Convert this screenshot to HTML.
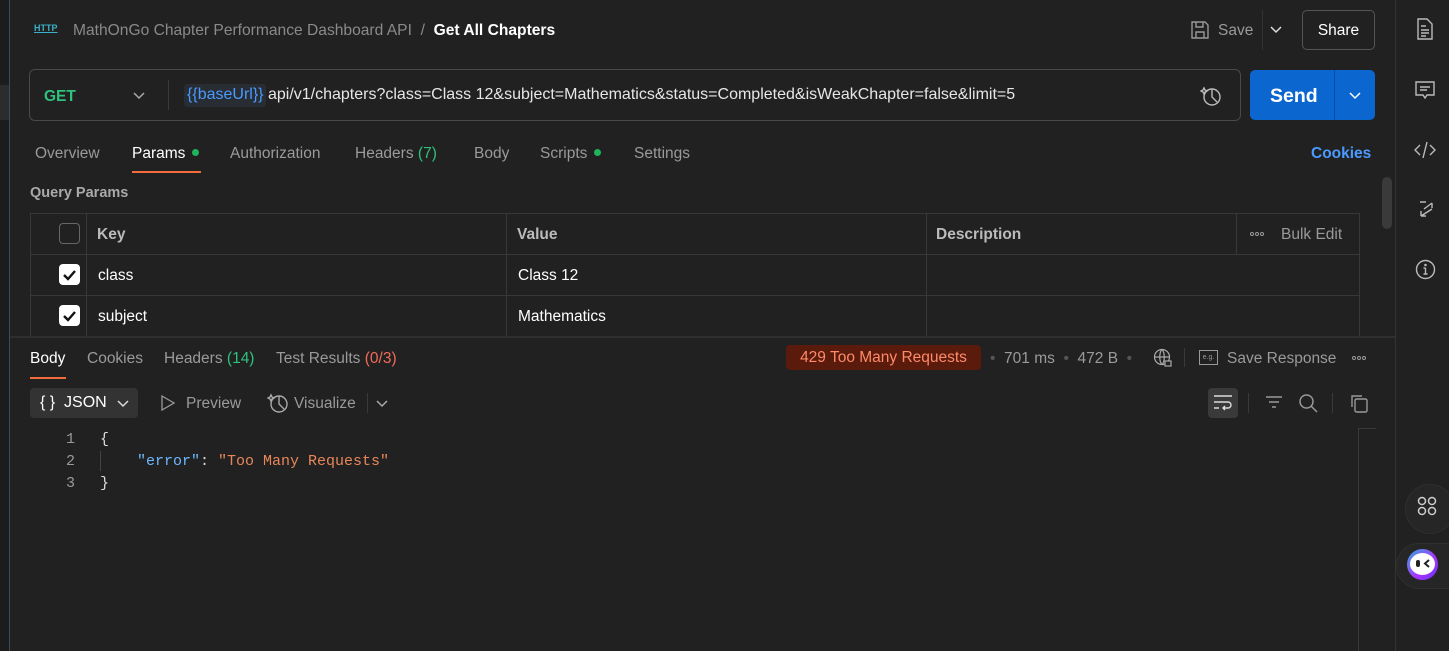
<!DOCTYPE html>
<html><head><meta charset="utf-8"><style>
*{box-sizing:border-box;margin:0;padding:0}
body{width:1449px;height:651px;background:#212121;font-family:"Liberation Sans",sans-serif;color:#c8c8c8;position:relative;overflow:hidden;font-size:15px}
.a{position:absolute;white-space:nowrap}
.g{color:#9a9a9a}
.w{color:#fff}
.dot{display:inline-block;width:7px;height:7px;border-radius:50%;background:#1fb35e;margin-left:7px;vertical-align:2px}
.cb{position:absolute;width:21px;height:21px;border-radius:4px}
.cb.on{background:#fff}
.cb.off{border:1px solid #666}
svg{position:absolute}
.oo{position:absolute;width:4px;height:4px;border:1px solid #999;border-radius:50%}
</style></head><body>
<div class="a" style="left:0;top:0;width:9px;height:651px;background:#1c1c1c"></div>
<div class="a" style="left:0;top:85px;width:9px;height:35px;background:#2c2c2c"></div>
<div class="a" style="left:9px;top:0;width:1px;height:651px;background:#3a4a66"></div>
<div class="a" style="left:1395px;top:0;width:1px;height:651px;background:#333"></div>

<div class="a" style="left:34px;top:23px;font-size:9px;color:#3ab0c8;font-weight:bold;text-decoration:underline">HTTP</div>
<div class="a" style="left:73px;top:22px;font-size:15.6px;color:#8a8a8a">MathOnGo Chapter Performance Dashboard API&nbsp; / &nbsp;<b style="color:#fff">Get All Chapters</b></div>
<svg style="left:1190px;top:20px" width="20" height="20" viewBox="0 0 20 20" fill="none" stroke="#999" stroke-width="1.4"><path d="M2 2h13l3 3v13H2z"/><path d="M6 2v5h7V2M6 18v-6h8v6"/></svg>
<div class="a g" style="left:1218px;top:22px;font-size:15.5px">Save</div>
<div class="a" style="left:1262px;top:10px;width:1px;height:40px;background:#333"></div>
<svg style="left:1270px;top:26px" width="12" height="8" viewBox="0 0 12 8" fill="none" stroke="#ddd" stroke-width="1.5"><path d="M1 1l5 5 5-5"/></svg>
<div class="a" style="left:1302px;top:10px;width:73px;height:40px;border:1px solid #555;border-radius:5px;color:#fff;text-align:center;line-height:39px;font-size:15.5px">Share</div>

<div class="a" style="left:29px;top:69px;width:1212px;height:52px;border:1px solid #4a4a4a;border-radius:6px"></div>
<div class="a" style="left:44px;top:88px;color:#2ec27e;font-weight:bold;font-size:15.5px">GET</div>
<svg style="left:133px;top:92px" width="12" height="8" viewBox="0 0 12 8" fill="none" stroke="#aaa" stroke-width="1.5"><path d="M1 1l5 5 5-5"/></svg>
<div class="a" style="left:168px;top:80px;width:1px;height:30px;background:#3a3a3a"></div>
<div class="a" style="left:184px;top:84px;width:82px;height:23px;background:#282c33;border-radius:3px"></div>
<div class="a" style="left:187px;top:86px;font-size:16px;color:#e6e6e6"><span style="color:#4a9aff">{{baseUrl}}</span> api/v1/chapters?class=Class 12&amp;subject=Mathematics&amp;status=Completed&amp;isWeakChapter=false&amp;limit=5</div>
<svg style="left:1200px;top:85px" width="22" height="22" viewBox="0 0 22 22" fill="none" stroke="#bbb" stroke-width="1.4"><circle cx="12" cy="12" r="8"/><path d="M12 4v8l5 5M4 3l1 2 2 1-2 1-1 2-1-2-2-1 2-1z"/></svg>
<div class="a" style="left:1250px;top:70px;width:125px;height:50px;background:#0b66d0;border-radius:5px"></div>
<div class="a" style="left:1334px;top:70px;width:1px;height:50px;background:#0a4f9f"></div>
<div class="a" style="left:1270px;top:85px;color:#fff;font-weight:bold;font-size:19.5px">Send</div>
<svg style="left:1349px;top:92px" width="12" height="8" viewBox="0 0 12 8" fill="none" stroke="#fff" stroke-width="1.5"><path d="M1 1l5 5 5-5"/></svg>

<div style="position:absolute;left:0;top:145px;width:1449px;font-size:15.5px">
<div class="a g" style="left:35px;top:0">Overview</div>
<div class="a w" style="left:132px;top:0">Params<span class="dot"></span></div>
<div class="a g" style="left:230px;top:0">Authorization</div>
<div class="a g" style="left:355px;top:0">Headers <span style="color:#2ec27e">(7)</span></div>
<div class="a g" style="left:474px;top:0">Body</div>
<div class="a g" style="left:540px;top:0">Scripts<span class="dot"></span></div>
<div class="a g" style="left:634px;top:0">Settings</div>
<div class="a" style="left:1311px;top:0;color:#4a9aff;font-weight:bold">Cookies</div>
</div>
<div class="a" style="left:132px;top:171px;width:69px;height:2px;background:#f26b3a"></div>

<div class="a" style="left:30px;top:185px;color:#aaa;font-weight:bold;font-size:14.5px">Query Params</div>
<div class="a" style="left:1382px;top:177px;width:10px;height:52px;background:#3a3a3a;border-radius:5px"></div>

<div class="a" style="left:30px;top:213px;width:1330px;height:124px;border:1px solid #383838;border-bottom:none"></div>
<div class="a" style="left:30px;top:254px;width:1330px;height:1px;background:#383838"></div>
<div class="a" style="left:30px;top:295px;width:1330px;height:1px;background:#383838"></div>
<div class="a" style="left:86px;top:213px;width:1px;height:124px;background:#383838"></div>
<div class="a" style="left:506px;top:213px;width:1px;height:124px;background:#383838"></div>
<div class="a" style="left:926px;top:213px;width:1px;height:124px;background:#383838"></div>
<div class="a" style="left:1236px;top:213px;width:1px;height:41px;background:#383838"></div>
<div class="cb off" style="left:59px;top:223px"></div>
<div class="cb on" style="left:59px;top:264px"></div>
<div class="cb on" style="left:59px;top:305px"></div>
<svg style="left:59px;top:264px" width="21" height="21" viewBox="0 0 21 21" fill="none" stroke="#111" stroke-width="2.4"><path d="M5 11l4 4 7-8"/></svg>
<svg style="left:59px;top:305px" width="21" height="21" viewBox="0 0 21 21" fill="none" stroke="#111" stroke-width="2.4"><path d="M5 11l4 4 7-8"/></svg>
<div style="position:absolute;left:0;top:226px;font-size:15.5px">
<div class="a" style="left:97px;top:0;color:#bbb;font-weight:bold">Key</div>
<div class="a" style="left:517px;top:0;color:#bbb;font-weight:bold">Value</div>
<div class="a" style="left:936px;top:0;color:#bbb;font-weight:bold">Description</div>
<div class="a g" style="left:1281px;top:0">Bulk Edit</div>
<div class="a w" style="left:98px;top:41px">class</div>
<div class="a w" style="left:518px;top:41px">Class 12</div>
<div class="a w" style="left:98px;top:82px">subject</div>
<div class="a w" style="left:518px;top:82px">Mathematics</div>
</div>
<div class="oo" style="left:1250px;top:232px"></div><div class="oo" style="left:1255px;top:232px"></div><div class="oo" style="left:1260px;top:232px"></div>

<div class="a" style="left:10px;top:336px;width:1385px;height:2px;background:#2e2e2e"></div>

<div style="position:absolute;left:0;top:350px;font-size:15.5px">
<div class="a w" style="left:30px;top:0">Body</div>
<div class="a g" style="left:87px;top:0">Cookies</div>
<div class="a g" style="left:164px;top:0">Headers <span style="color:#2ec27e">(14)</span></div>
<div class="a g" style="left:276px;top:0">Test Results <span style="color:#f26b5a">(0/3)</span></div>
<div class="a g" style="left:990px;top:0"><span style="color:#555">•</span>&nbsp; 701 ms &nbsp;<span style="color:#555">•</span>&nbsp; 472 B &nbsp;<span style="color:#555">•</span></div>
<div class="a g" style="left:1227px;top:0">Save Response</div>
</div>
<div class="a" style="left:30px;top:377px;width:36px;height:2px;background:#f26b3a"></div>
<div class="a" style="left:786px;top:345px;width:195px;height:25px;background:#5a1a0c;border-radius:4px;color:#ff8a6a;text-align:center;line-height:26px;font-size:15.5px">429 Too Many Requests</div>
<svg style="left:1153px;top:348px" width="20" height="20" viewBox="0 0 20 20" fill="none" stroke="#aaa" stroke-width="1.2"><circle cx="9" cy="9" r="7.5"/><path d="M1.5 9h15M9 1.5c-3 3-3 12 0 15M9 1.5c3 3 3 12 0 15"/><rect x="12" y="13" width="6" height="5" fill="#212121"/></svg>
<div class="a" style="left:1184px;top:348px;width:1px;height:19px;background:#3a3a3a"></div>
<div class="a" style="left:1199px;top:350px;width:19px;height:15px;border:1px solid #999;font-size:7px;color:#999;text-align:center;line-height:13px">e.g.</div>
<div class="oo" style="left:1352px;top:356px"></div><div class="oo" style="left:1357px;top:356px"></div><div class="oo" style="left:1362px;top:356px"></div>

<div class="a" style="left:30px;top:388px;width:108px;height:30px;background:#333;border-radius:4px"></div>
<div class="a w" style="left:40px;top:394px;font-size:16px">{ }&nbsp; JSON</div>
<svg style="left:117px;top:400px" width="12" height="8" viewBox="0 0 12 8" fill="none" stroke="#ddd" stroke-width="1.5"><path d="M1 1l5 5 5-5"/></svg>
<svg style="left:160px;top:394px" width="16" height="18" viewBox="0 0 16 18" fill="none" stroke="#999" stroke-width="1.3"><path d="M2 2l12 7-12 7z"/></svg>
<div class="a g" style="left:186px;top:395px;font-size:15.5px">Preview</div>
<svg style="left:267px;top:392px" width="22" height="22" viewBox="0 0 22 22" fill="none" stroke="#aaa" stroke-width="1.4"><circle cx="12" cy="12" r="8"/><path d="M12 4v8l5 5M4 3l1 2 2 1-2 1-1 2-1-2-2-1 2-1z"/></svg>
<div class="a g" style="left:294px;top:395px;font-size:15.5px">Visualize</div>
<div class="a" style="left:367px;top:393px;width:1px;height:20px;background:#3a3a3a"></div>
<svg style="left:376px;top:400px" width="12" height="8" viewBox="0 0 12 8" fill="none" stroke="#aaa" stroke-width="1.5"><path d="M1 1l5 5 5-5"/></svg>
<div class="a" style="left:1208px;top:388px;width:30px;height:30px;background:#3a3a3a;border-radius:4px"></div>
<svg style="left:1213px;top:395px" width="20" height="16" viewBox="0 0 20 16" fill="none" stroke="#ddd" stroke-width="1.4"><path d="M1 1h18M1 7h14a3 3 0 010 6H10M1 13h5M12 11l-2 2 2 2"/></svg>
<div class="a" style="left:1248px;top:393px;width:1px;height:20px;background:#3a3a3a"></div>
<svg style="left:1265px;top:395px" width="18" height="16" viewBox="0 0 18 16" fill="none" stroke="#999" stroke-width="1.4"><path d="M1 2h16M4 7h10M7 12h4"/></svg>
<svg style="left:1298px;top:393px" width="20" height="20" viewBox="0 0 20 20" fill="none" stroke="#999" stroke-width="1.5"><circle cx="8.5" cy="8.5" r="6.5"/><path d="M13 13l6 6"/></svg>
<div class="a" style="left:1332px;top:393px;width:1px;height:20px;background:#3a3a3a"></div>
<svg style="left:1350px;top:394px" width="19" height="19" viewBox="0 0 19 19" fill="none" stroke="#999" stroke-width="1.4"><rect x="5" y="5" width="12" height="13" rx="1.5"/><path d="M2 13V2h10"/></svg>

<div class="a" style="left:1358px;top:428px;width:1px;height:223px;background:#3a3a3a"></div>
<div class="a" style="left:1358px;top:428px;width:18px;height:1px;background:#3a3a3a"></div>
<div style="position:absolute;left:0;top:429px;font-family:'Liberation Mono',monospace;font-size:15px;line-height:22.5px">
<div class="a" style="left:66px;top:0;color:#9a9a9a">1</div><div class="a" style="left:100px;top:0;color:#ddd">{</div>
<div class="a" style="left:66px;top:22px;color:#9a9a9a">2</div>
<div class="a" style="left:100px;top:22px;width:1px;height:20px;background:#444"></div>
<div class="a" style="left:137px;top:22px"><span style="color:#6cb8ff">"error"</span><span style="color:#ddd">: </span><span style="color:#e8865a">"Too Many Requests"</span></div>
<div class="a" style="left:66px;top:44px;color:#9a9a9a">3</div><div class="a" style="left:100px;top:44px;color:#ddd">}</div>
</div>

<svg style="left:1416px;top:18px" width="18" height="22" viewBox="0 0 18 22" fill="none" stroke="#bbb" stroke-width="1.4"><path d="M2 1h9l5 5v15H2z"/><path d="M5 8h5M5 12h8M5 15h8M5 18h5"/></svg>
<svg style="left:1415px;top:80px" width="20" height="20" viewBox="0 0 20 20" fill="none" stroke="#bbb" stroke-width="1.4"><path d="M1 2h18v13H12l-2 3-2-3H1z"/><path d="M5 7h10M5 10h7"/></svg>
<svg style="left:1414px;top:141px" width="22" height="18" viewBox="0 0 22 18" fill="none" stroke="#bbb" stroke-width="1.4"><path d="M6 4L1 9l5 5M16 4l5 5-5 5M13 1L9 17"/></svg>
<svg style="left:1418px;top:200px" width="16" height="18" viewBox="0 0 16 18" fill="none" stroke="#bbb" stroke-width="1.4"><path d="M2 2h6M14 3L6 9M14 3v5M14 9L3 16M3 16h5M3 16v-5"/></svg>
<svg style="left:1415px;top:259px" width="21" height="21" viewBox="0 0 21 21" fill="none" stroke="#bbb" stroke-width="1.4"><circle cx="10.5" cy="10.5" r="9"/><path d="M10.5 9v6M8.5 15h4M8.5 9h2"/><circle cx="10.5" cy="6" r=".6" fill="#bbb"/></svg>
<div class="a" style="left:1405px;top:484px;width:50px;height:50px;border-radius:25px;background:#262626;border:1px solid #2f2f2f"></div>
<svg style="left:1417px;top:496px" width="20" height="20" viewBox="0 0 20 20" fill="none" stroke="#ccc" stroke-width="1.5"><circle cx="5" cy="5" r="3.5"/><circle cx="15" cy="5" r="3.5"/><circle cx="5" cy="15" r="3.5"/><circle cx="15" cy="15" r="3.5"/></svg>
<div class="a" style="left:1396px;top:543px;width:60px;height:46px;border-radius:23px 0 0 23px;background:#262626;border:1px solid #2f2f2f"></div>
<div class="a" style="left:1407px;top:549px;width:31px;height:31px;border-radius:50%;background:linear-gradient(135deg,#3ad,#a3f 60%,#63f)"></div>
<div class="a" style="left:1410px;top:553px;width:25px;height:22px;border-radius:50%;background:#fff"></div>
<div class="a" style="left:1416px;top:560px;width:4px;height:7px;background:#222;border-radius:2px"></div>
<svg style="left:1423px;top:559px" width="7" height="9" viewBox="0 0 7 9" fill="none" stroke="#222" stroke-width="2"><path d="M6 1L2 4.5 6 8"/></svg>
</body></html>
